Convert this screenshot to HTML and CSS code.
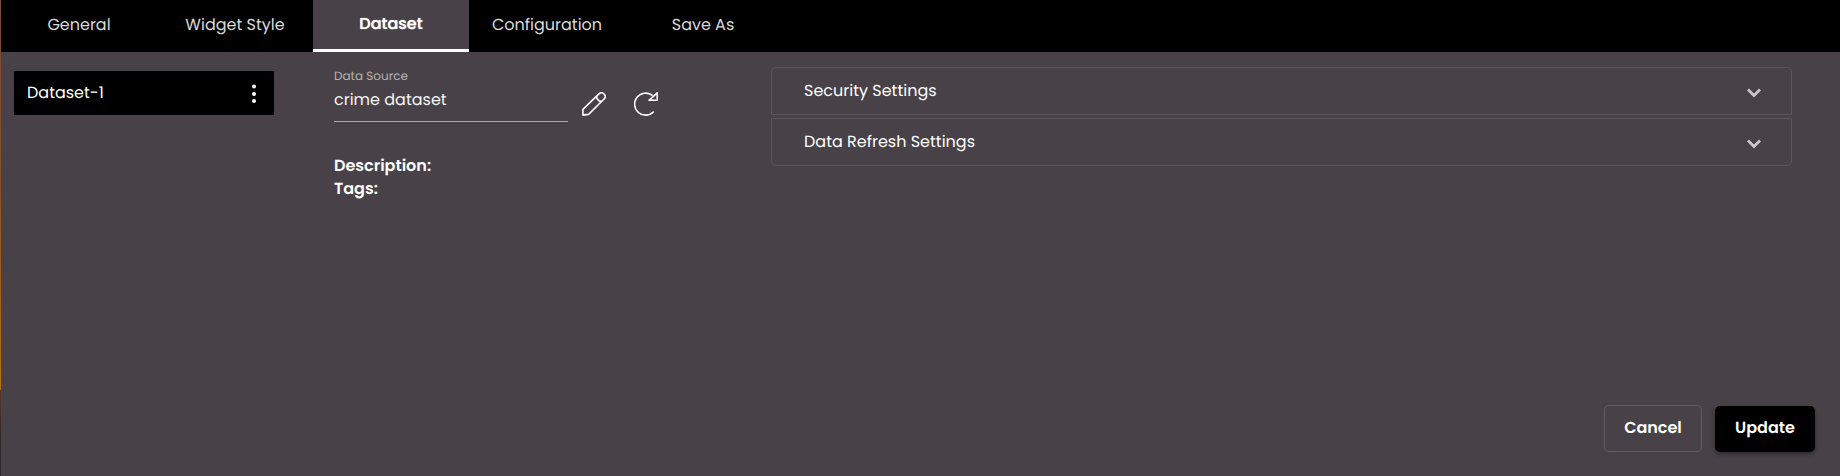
FILE: index.html
```html
<!DOCTYPE html>
<html lang="en">
<head>
<meta charset="utf-8">
<meta name="viewport" content="width=device-width, initial-scale=1">
<title>Widget settings</title>
<link rel="stylesheet" href="styles.css">
</head>
<body>
<div class="dialog">
  <nav class="tabs" role="tablist">
    <button class="tab" role="tab" type="button">General</button>
    <button class="tab" role="tab" type="button">Widget Style</button>
    <button class="tab active" role="tab" type="button" aria-selected="true">Dataset</button>
    <button class="tab" role="tab" type="button">Configuration</button>
    <button class="tab" role="tab" type="button">Save As</button>
  </nav>
  <main class="content">
    <aside class="datasets">
      <div class="dataset-item">
        <span>Dataset-1</span>
        <button class="more" type="button" aria-label="More options">
          <svg width="4" height="20" viewBox="0 0 4 20" fill="#fff"><circle cx="2" cy="3.5" r="2"/><circle cx="2" cy="11" r="2"/><circle cx="2" cy="18" r="2"/></svg>
        </button>
      </div>
    </aside>
    <section class="source">
      <div class="source-row">
        <div class="field">
          <label for="source">Data Source</label>
          <input id="source" type="text" value="crime dataset" readonly>
        </div>
        <button class="icon" type="button" aria-label="Edit">
          <svg width="24" height="24" viewBox="0 0 24 24" fill="none" stroke="#fff" stroke-width="1.6" stroke-linejoin="round"><path d="M.9 23.1V17.4L17.2 1.7Q19.4-.3 21.7 1.7L22.3 2.4Q24.3 4.6 22.3 6.8L6.6 22.4Z"/><path d="M14.5 4.4Q14.9 8.8 19.6 9.5"/></svg>
        </button>
        <button class="icon" type="button" aria-label="Refresh">
          <svg width="24" height="24" viewBox="0 0 24 24" fill="none" stroke="#fff" stroke-width="1.6" stroke-linecap="round" stroke-linejoin="round"><path d="M18 3.2A11 11 0 1 0 19.3 20"/><path d="M23.2.8V8.3H15Z"/></svg>
        </button>
      </div>
      <div class="details">
        <div>Description:</div>
        <div>Tags:</div>
      </div>
    </section>
    <section class="accordion">
      <button class="panel" type="button" aria-expanded="false">
        <span>Security Settings</span>
        <svg width="14" height="10" viewBox="0 0 14 10" fill="none" stroke="#cac8cb" stroke-width="2.8"><path d="M1 1.5L7 7.5L13 1.5"/></svg>
      </button>
      <button class="panel" type="button" aria-expanded="false">
        <span>Data Refresh Settings</span>
        <svg width="14" height="10" viewBox="0 0 14 10" fill="none" stroke="#cac8cb" stroke-width="2.8"><path d="M1 1.5L7 7.5L13 1.5"/></svg>
      </button>
    </section>
  </main>
  <footer class="actions">
    <button class="btn cancel" type="button">Cancel</button>
    <button class="btn update" type="button">Update</button>
  </footer>
</div>
</body>
</html>
```
FILE: styles.css
```css
* { box-sizing: border-box; }

body {
  margin: 0;
  padding-left: 1px;
  background: linear-gradient(#754a38, #8a5228 40%, #b8720f 82%, #573626 82%, #2e2629 92%);
  color: #fff;
  font: 16px/24px Poppins, Inter, sans-serif;
  text-rendering: geometricPrecision;
}

button, input {
  margin: 0;
  padding: 0;
  border: 0;
  background: none;
  color: inherit;
  font: inherit;
  text-rendering: inherit;
}

svg { display: block; }

.dialog {
  display: flex;
  flex-direction: column;
  min-height: 100vh;
  background: #484248;
}

.tabs {
  display: flex;
  height: 52px;
  background: #000;
}

.tab {
  width: 156px;
  color: #dadada;
  padding-bottom: 2px;
}

.tab.active {
  background: #484248;
  border-bottom: 3px solid #fff;
  color: #fff;
  font-weight: 500;
  text-shadow: 0 0 1px #fff;
}

.content {
  display: flex;
  flex: 1;
  align-items: flex-start;
  padding: 15px 48px 0 13px;
}

.datasets {
  width: 260px;
  margin: 4px 60px 0 0;
}

.dataset-item {
  display: flex;
  align-items: center;
  justify-content: space-between;
  height: 44px;
  padding: 0 18px 0 13px;
  background: #000;
}

.source {
  width: 437px;
}

.source-row {
  display: flex;
  align-items: flex-start;
}

.field {
  display: flex;
  flex-direction: column;
  width: 234px;
  height: 55px;
  margin-right: 14px;
  border-bottom: 1px solid #aba8ab;
}

.field label {
  color: #b5b3b5;
  font-size: 12px;
  line-height: 20px;
}

.field input {
  width: 100%;
  height: 25px;
  color: #f5f5f5;
}

.icon {
  margin: 25px 28px 0 0;
}

.details {
  margin-top: 32px;
  font-weight: 600;
  line-height: 23px;
}

.accordion {
  display: flex;
  flex: 1;
  flex-direction: column;
  gap: 3px;
}

.panel {
  display: flex;
  align-items: center;
  justify-content: space-between;
  height: 48px;
  padding: 0 30px 0 32px;
  border: 1px solid #5a545b;
}

.panel svg {
  margin-top: 4px;
}

.panel:first-child { border-radius: 5px 5px 0 0; }
.panel:last-child { border-radius: 0 0 5px 5px; }

.actions {
  display: flex;
  align-items: flex-end;
  justify-content: flex-end;
  gap: 13px;
  padding: 0 25px 24px;
}

.btn {
  height: 46px;
  padding-bottom: 2px;
  border-radius: 5px;
  font-weight: 600;
}

.cancel {
  width: 98px;
  height: 47px;
  border: 1px solid #625c63;
}

.update {
  width: 100px;
  background: #000;
  box-shadow: 0 2px 4px #0006;
}
```
